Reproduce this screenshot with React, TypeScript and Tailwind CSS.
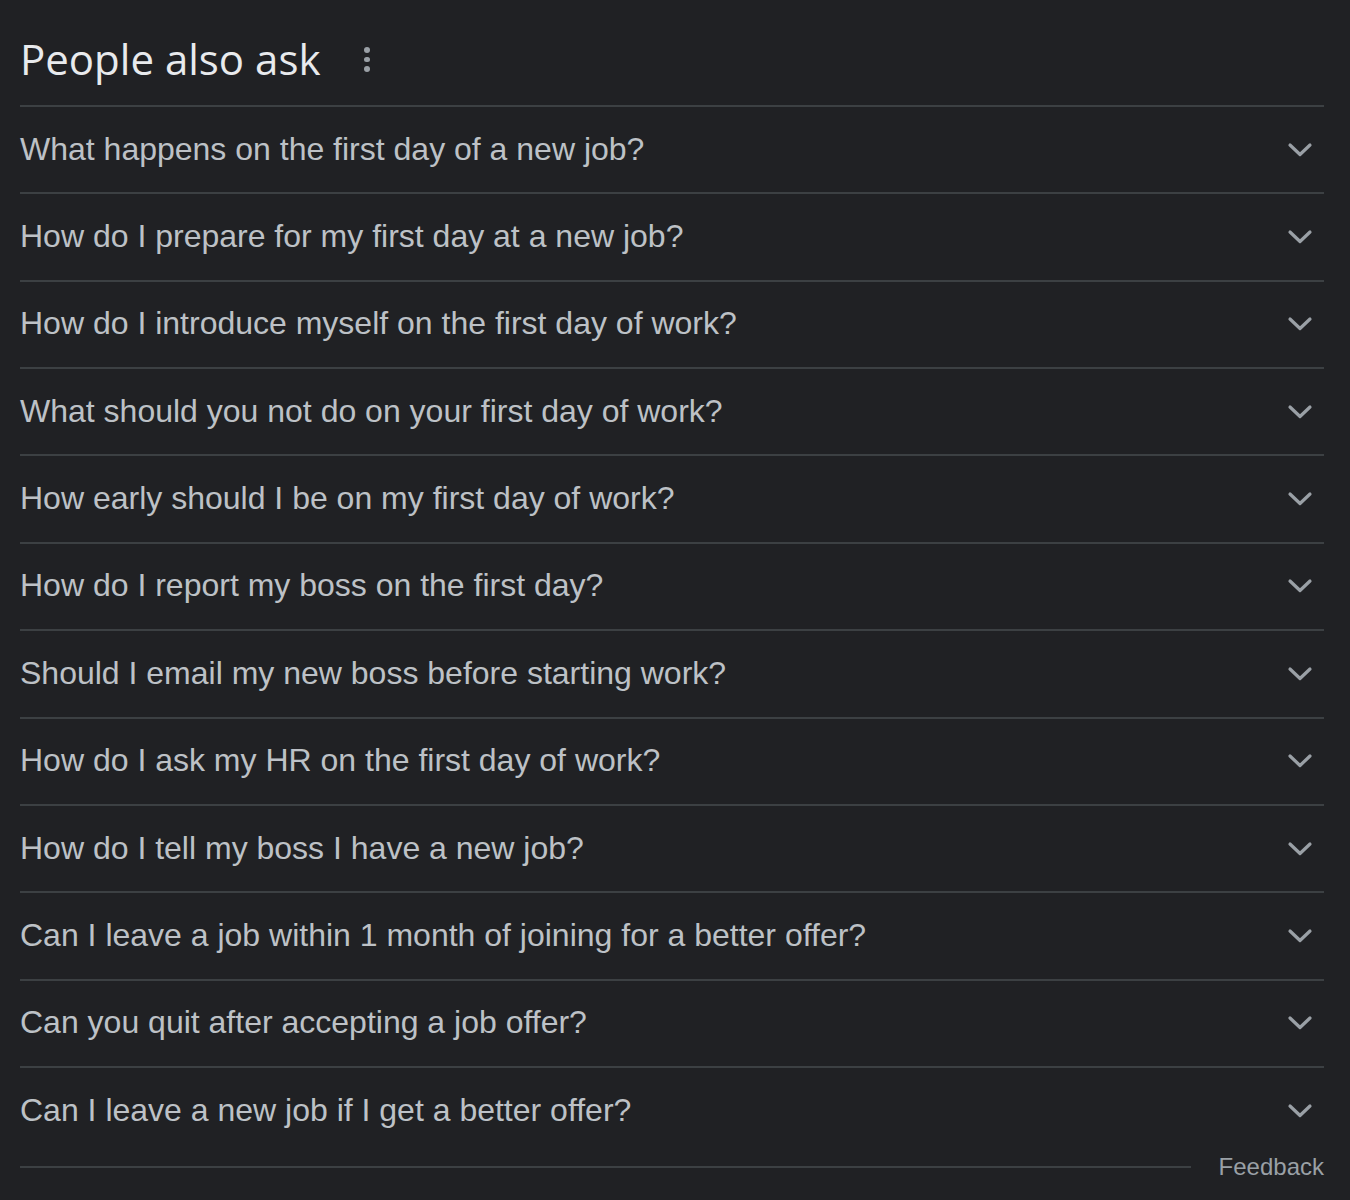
import React from "react";

const questions = [
  "What happens on the first day of a new job?",
  "How do I prepare for my first day at a new job?",
  "How do I introduce myself on the first day of work?",
  "What should you not do on your first day of work?",
  "How early should I be on my first day of work?",
  "How do I report my boss on the first day?",
  "Should I email my new boss before starting work?",
  "How do I ask my HR on the first day of work?",
  "How do I tell my boss I have a new job?",
  "Can I leave a job within 1 month of joining for a better offer?",
  "Can you quit after accepting a job offer?",
  "Can I leave a new job if I get a better offer?",
];

function Chevron() {
  return (
    <svg width="26" height="16" viewBox="0 0 26 16" fill="none">
      <path d="M3 3 L13 12.5 L23 3" stroke="#9aa0a6" strokeWidth="3.2" strokeLinecap="round" strokeLinejoin="round" />
    </svg>
  );
}

export default function App() {
  return (
    <div className="w-[1350px] h-[1200px] bg-[#202124] pl-[20px] pr-[26px]">
      <div className="h-[105px] flex items-center pt-[12px]">
        <span className="text-[#e8eaed] text-[42px]" style={{ fontFamily: "'Open Sans', Roboto, sans-serif" }}>
          People also ask
        </span>
        <div className="ml-[44px] flex flex-col gap-[4px] mt-[2px]">
          <span className="block w-[5.5px] h-[5.5px] rounded-full bg-[#9aa0a6]" />
          <span className="block w-[5.5px] h-[5.5px] rounded-full bg-[#9aa0a6]" />
          <span className="block w-[5.5px] h-[5.5px] rounded-full bg-[#9aa0a6]" />
        </div>
      </div>
      <div className="flex flex-col">
        {questions.map((q) => (
          <div key={q} className="h-[87.36px] border-t-2 border-[#3c4043] flex items-center justify-between">
            <span className="text-[#bdc1c6] text-[32px] mb-[2px]" style={{ fontFamily: "'Liberation Sans', Arial, sans-serif" }}>
              {q}
            </span>
            <div className="mr-[11px]">
              <Chevron />
            </div>
          </div>
        ))}
      </div>
      <div className="flex items-center gap-[28px] mt-[-4px]">
        <div className="flex-1 h-[2px] bg-[#3c4043]" />
        <span className="text-[#9aa0a6] text-[24px]" style={{ fontFamily: "'Liberation Sans', Arial, sans-serif" }}>
          Feedback
        </span>
      </div>
    </div>
  );
}
